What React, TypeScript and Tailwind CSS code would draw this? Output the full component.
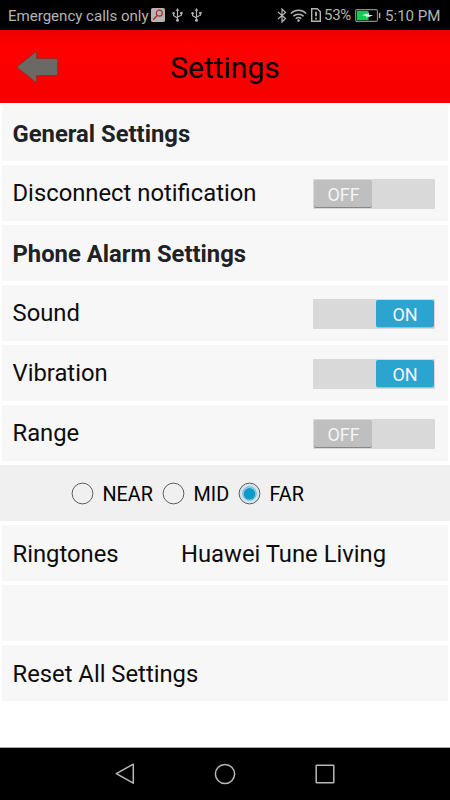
import { useState, type ReactNode } from 'react'
import clsx from 'clsx'

function UsbIcon() {
  return (
    <svg width="11" height="14" viewBox="0 0 11 14" fill="none" stroke="#b4b4b4" strokeWidth="1.2">
      <path d="M5.5 2v10M1.6 5.5v2.2l3.9 2.2M9.4 5v2.2L5.5 9" />
      <path d="M5.5 0l1.8 2.8H3.7z" fill="#b4b4b4" stroke="none" />
      <circle cx="5.5" cy="12.2" r="1.5" fill="#b4b4b4" stroke="none" />
      <circle cx="1.6" cy="5.2" r="1.2" fill="#b4b4b4" stroke="none" />
      <path d="M8.2 3.9h2.4v2.3H8.2z" fill="#b4b4b4" stroke="none" />
    </svg>
  )
}

function StatusBar() {
  return (
    <div className="flex h-[30px] items-center bg-black text-[15.1px] leading-none text-[#b4b4b4]">
      <span className="ml-2 w-[143px] pt-[3px] whitespace-nowrap tracking-[-0.03px]">Emergency calls only</span>
      <svg width="14" height="14" viewBox="0 0 14 14" fill="none">
        <rect width="14" height="14" rx="1.8" fill="#b9b4b4" />
        <circle cx="8.3" cy="5.2" r="3" stroke="#b02a2a" strokeWidth="1.2" />
        <path d="M6.2 7.5L2.2 11.8" stroke="#b02a2a" strokeWidth="1.4" />
      </svg>
      <div className="ml-[6.5px] flex gap-2">
        <UsbIcon />
        <UsbIcon />
      </div>
      <div className="ml-auto flex items-center pr-[11px]">
        <svg width="10" height="15" viewBox="0 0 10 15" fill="none" stroke="#b4b4b4" strokeWidth="1.2">
          <path d="M1 4l7.6 6.5L5 14V1l3.6 3.5L1 11" />
        </svg>
        <svg className="ml-[3px]" width="17" height="13" viewBox="0 0 17 13" fill="none" stroke="#b4b4b4" strokeWidth="1.5">
          <path d="M.8 4.5c4.4-4.2 11-4.2 15.4 0M3.3 7.3c3-2.8 7.4-2.8 10.4 0M5.7 9.8c1.7-1.5 3.9-1.5 5.6 0" />
          <circle cx="8.5" cy="11.6" r="1.3" fill="#b4b4b4" stroke="none" />
        </svg>
        <svg className="ml-1" width="10" height="14" viewBox="0 0 10 14" fill="none" stroke="#b4b4b4" strokeWidth="1.4">
          <path d="M.7.7h5.6l3 3v9.6H.7z" />
          <path d="M5 3.7v4.6M5 9.8v1.7" strokeWidth="1.8" />
        </svg>
        <span className="ml-[3px] w-[28px] whitespace-nowrap pt-px text-[15px] tracking-[-0.3px]">53%</span>
        <svg className="ml-[3px]" width="26" height="13" viewBox="0 0 26 13" fill="none">
          <rect x=".6" y=".6" width="21.8" height="11.8" rx="1.4" stroke="#8c8c8c" strokeWidth="1.1" />
          <rect x="1.8" y="1.8" width="11.7" height="9.4" fill="#0fce54" />
          <path d="M7 6.3l5-1.8v1.3l1.8-2.2v2.2l4.3.5-5 2v-1.2l-1.7 2.1V7z" fill="#e8f4eb" />
          <path d="M24.6 3.8v5.4" stroke="#b4b4b4" strokeWidth="1.4" />
        </svg>
        <span className="ml-1 w-[54px] pt-[3px] whitespace-nowrap">5:10 PM</span>
      </div>
    </div>
  )
}

function Header() {
  return (
    <header className="grid h-[73px] grid-cols-[90px_1fr_90px] items-center bg-linear-to-b from-[#ea0000] via-[#ff0000] via-20% to-[#f60000]">
      <button type="button" aria-label="Back" className="pl-4">
        <svg width="43" height="34" viewBox="0 0 43 34">
          <path d="M.7 17L20.5 1.2v7.4h19.2q2 0 2 2v13q0 2-2 2H20.5v7.2z" fill="#6b6965" stroke="#8c3029" strokeWidth=".9" strokeLinejoin="round" />
        </svg>
      </button>
      <h1 className="pt-[3px] text-center text-[30px] leading-none text-black">Settings</h1>
    </header>
  )
}

function Row({ children }: { children?: ReactNode }) {
  return <div className="mx-0.5 flex h-14 items-center bg-[#f7f7f7] pr-[13px] pl-[10.5px]">{children}</div>
}

function Toggle({ initial = false }: { initial?: boolean }) {
  const [on, setOn] = useState(initial)
  return (
    <button
      type="button"
      role="switch"
      aria-checked={on}
      onClick={() => setOn(!on)}
      className={clsx('mt-px ml-auto flex h-[30px] w-[122.4px] items-center bg-[#d9d9d9] px-[1.5px]', on && 'justify-end')}
    >
      <span
        className={clsx(
          'flex h-[27px] w-[58px] items-center justify-center rounded-[2px] pt-[3px] pl-px text-[18px] leading-none text-[#f4f4f4]',
          on ? 'bg-[#2ca4d0] shadow-[0_1px_0_#a9bcc4]' : 'bg-[#bfbfbf] shadow-[0_1px_0_#858585]',
        )}
      >
        {on ? 'ON' : 'OFF'}
      </span>
    </button>
  )
}

const ranges = [
  { label: 'NEAR', width: 'w-[91px]' },
  { label: 'MID', width: 'w-[76px]' },
  { label: 'FAR', width: 'w-[70px]' },
]

function RangePicker() {
  const [selected, setSelected] = useState('FAR')
  return (
    <div role="radiogroup" className="flex h-14 items-center bg-[#f0f0f0] pl-[71px]">
      {ranges.map(({ label, width }) => (
        <button
          key={label}
          type="button"
          role="radio"
          aria-checked={selected === label}
          onClick={() => setSelected(label)}
          className={clsx('flex items-center gap-[8.5px] text-[19.8px] leading-none text-black', width)}
        >
          <svg className="shrink-0" width="23" height="23" viewBox="0 0 23 23" fill="none">
            {selected === label && <circle cx="11.5" cy="11.5" r="9.8" fill="#cce7f1" />}
            <circle cx="11.5" cy="11.5" r="10.4" stroke="#4c4c4c" strokeWidth=".9" />
            {selected === label && (
              <>
                <circle cx="11.5" cy="11.5" r="6.8" fill="#a9d7e8" stroke="#6a9aaa" strokeWidth=".7" />
                <circle cx="11.5" cy="11.8" r="5.8" fill="#0a9acb" />
              </>
            )}
          </svg>
          <span className="pt-[3px]">{label}</span>
        </button>
      ))}
    </div>
  )
}

function NavBar() {
  return (
    <nav className="mt-auto flex h-[53px] items-center justify-center gap-[78px] border-t border-[#a8a8a8] bg-black">
      <svg width="22" height="22" viewBox="0 0 22 22" fill="none" stroke="#b8b8b8" strokeWidth="1.5" strokeLinejoin="round">
        <path d="M19.3 1.2v19L2.3 10.7z" />
      </svg>
      <svg width="22" height="22" viewBox="0 0 22 22" fill="none" stroke="#b8b8b8" strokeWidth="1.5">
        <circle cx="11" cy="11" r="9.6" />
      </svg>
      <svg width="22" height="22" viewBox="0 0 22 22" fill="none" stroke="#b8b8b8" strokeWidth="1.5">
        <rect x="2.2" y="2.2" width="17.6" height="17.6" rx=".6" />
      </svg>
    </nav>
  )
}

export default function App() {
  return (
    <div className="flex h-[800px] w-[450px] flex-col overflow-hidden bg-white font-[Roboto,sans-serif] text-[23.8px] leading-[24px] text-[#0c0c0c]">
      <StatusBar />
      <Header />
      <main className="flex flex-col gap-1 pt-[2px]">
        <Row>
          <h2 className="pt-0.5 font-bold text-[#202124]">General Settings</h2>
        </Row>
        <Row>
          <span>Disconnect notification</span>
          <Toggle />
        </Row>
        <Row>
          <h2 className="pt-0.5 font-bold text-[#202124]">Phone Alarm Settings</h2>
        </Row>
        <Row>
          <span>Sound</span>
          <Toggle initial />
        </Row>
        <Row>
          <span>Vibration</span>
          <Toggle initial />
        </Row>
        <Row>
          <span>Range</span>
          <Toggle />
        </Row>
        <RangePicker />
        <Row>
          <span className="w-[168.5px] pt-0.5">Ringtones</span>
          <span className="pt-0.5">Huawei Tune Living</span>
        </Row>
        <Row />
        <Row>
          <span className="pt-0.5">Reset All Settings</span>
        </Row>
      </main>
      <NavBar />
    </div>
  )
}
